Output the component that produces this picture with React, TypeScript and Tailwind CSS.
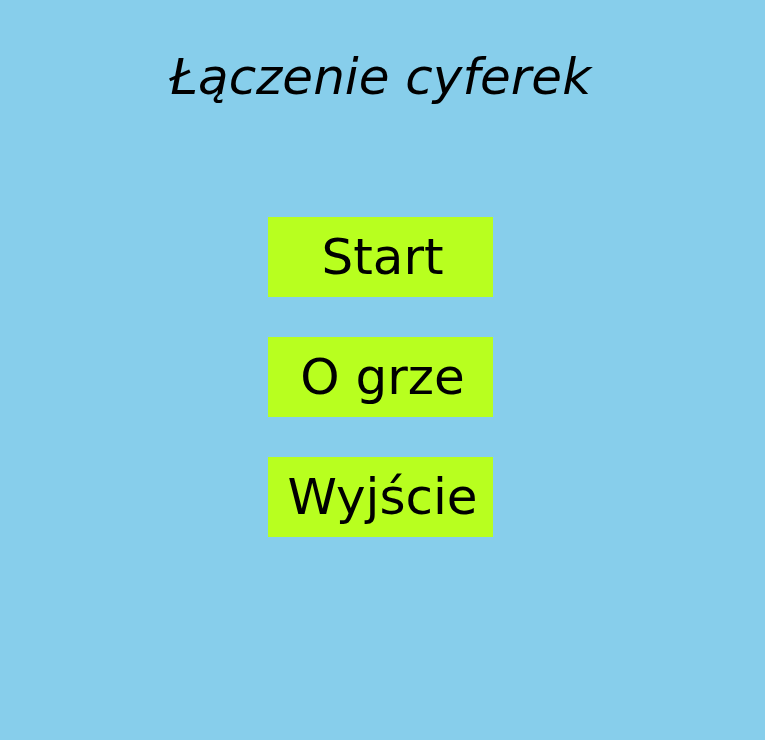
import React from 'react';

const buttons = ['Start', 'O grze', 'Wyjście'];

const App: React.FC = () => {
  return (
    <div
      className="w-full h-[740px] bg-[#87ceeb] flex flex-col items-center pr-[4px] text-black"
      style={{ fontFamily: '"DejaVu Sans", sans-serif' }}
    >
      <h1 className="mt-[48px] text-[50px] italic font-normal leading-[58px]">Łączenie cyferek</h1>
      <div className="mt-[111px] flex flex-col gap-[40px]">
        {buttons.map((label) => (
          <button
            key={label}
            className="w-[225px] h-[80px] bg-[#b8ff1f] flex items-center justify-center pl-[4px] text-[50px] leading-none"
          >
            {label}
          </button>
        ))}
      </div>
    </div>
  );
};

export default App;
